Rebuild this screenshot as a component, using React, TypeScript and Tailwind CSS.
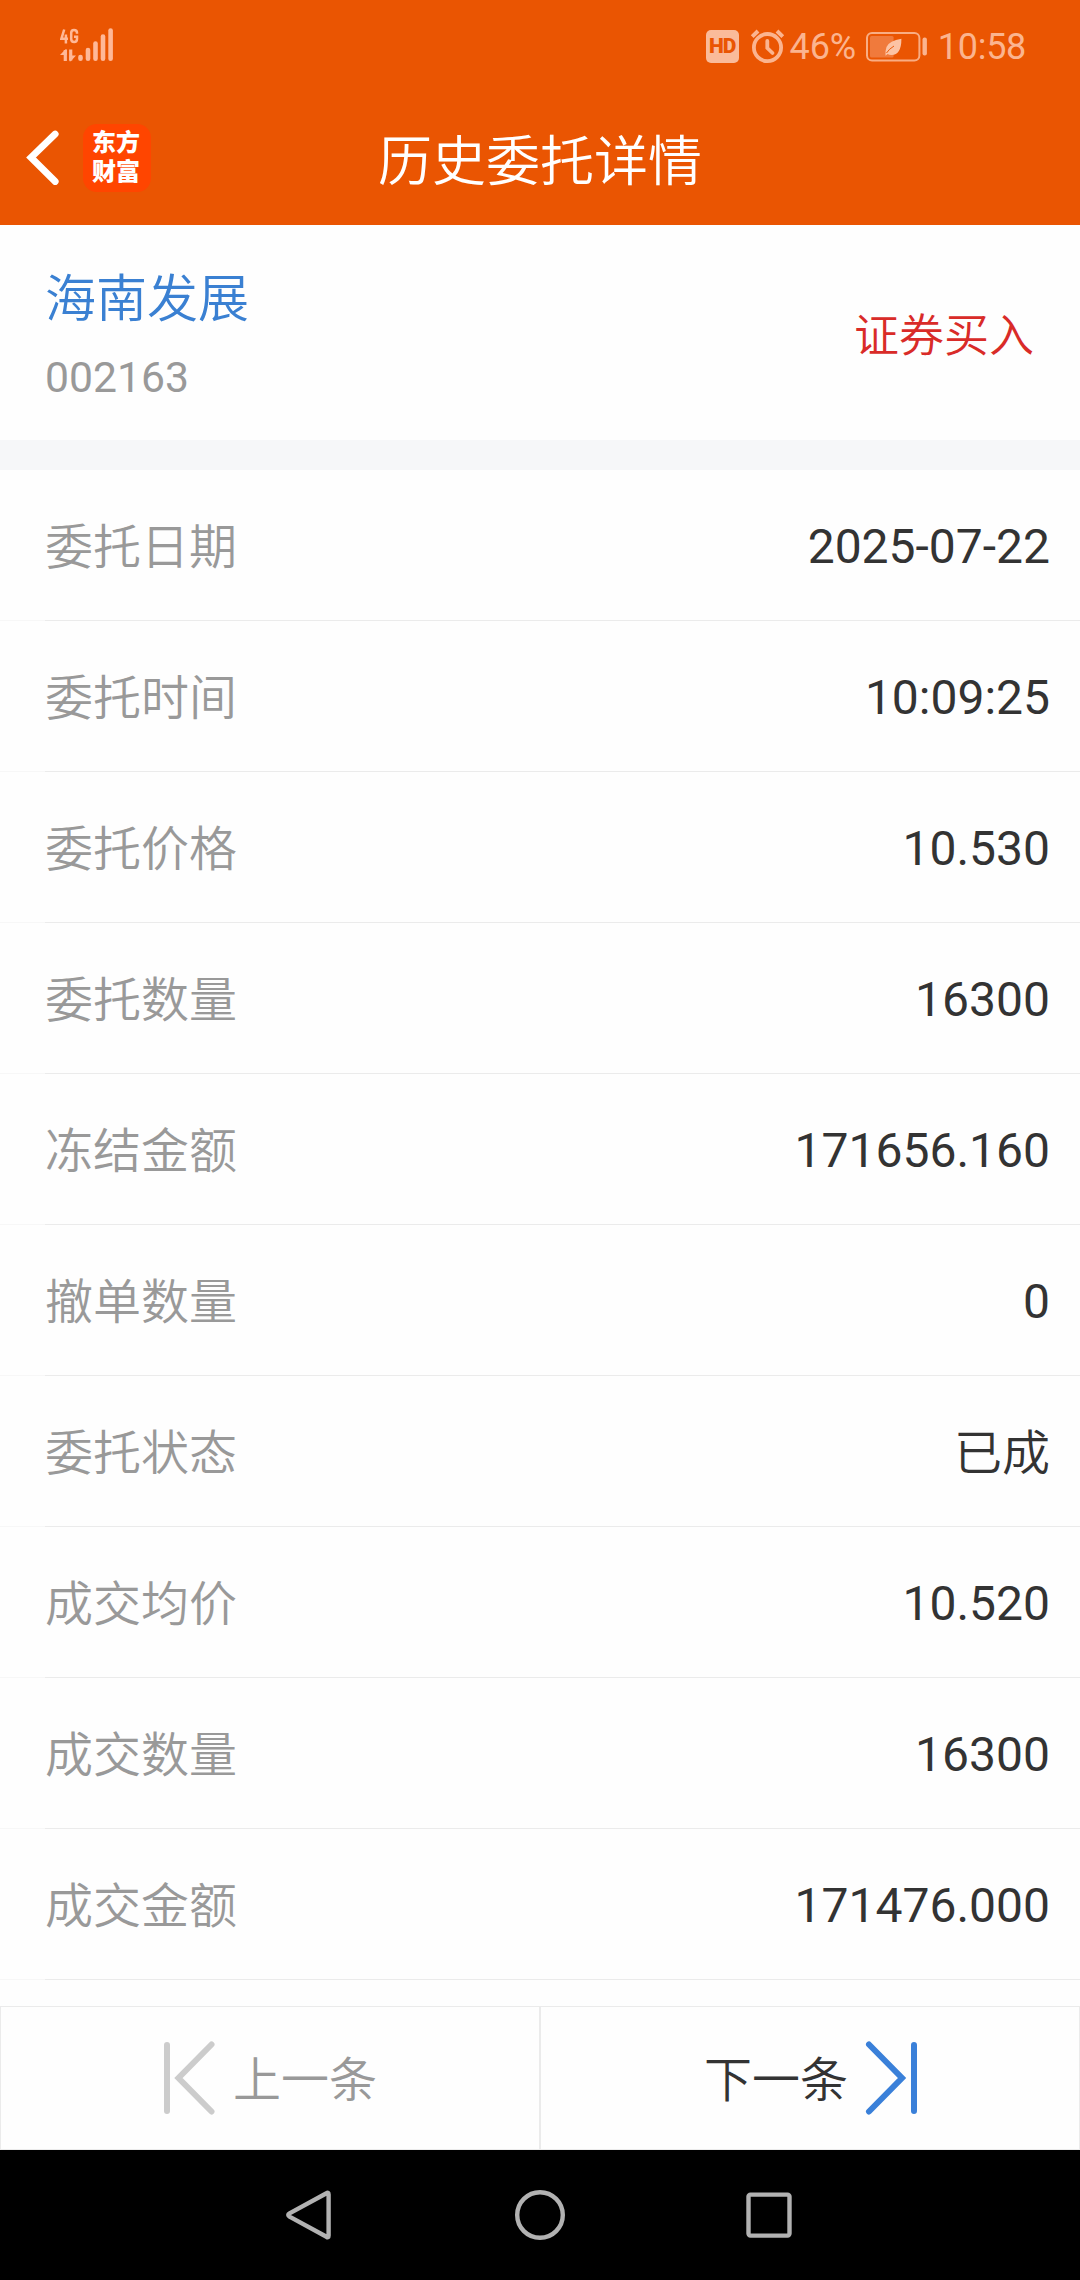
const rows: [string, string][] = [
  ['委托日期', '2025-07-22'],
  ['委托时间', '10:09:25'],
  ['委托价格', '10.530'],
  ['委托数量', '16300'],
  ['冻结金额', '171656.160'],
  ['撤单数量', '0'],
  ['委托状态', '已成'],
  ['成交均价', '10.520'],
  ['成交数量', '16300'],
  ['成交金额', '171476.000'],
];

function SignalIcon() {
  return (
    <svg className="h-[36px] w-[56px]" viewBox="0 0 56 36" fill="none" stroke="#ffb897">
      <path d="M4.2 1.5 L1.4 10.8 H8 M5.9 6.5 V15.5" strokeWidth="2.5" />
      <path d="M17 5.8 V4.8 Q17 2 14 2 Q11.2 2 11.2 5 V11 Q11.2 14 14.2 14 Q17 14 17 11 V8.8 H14" strokeWidth="2.5" />
      <path d="M5.3 22 V33" strokeWidth="3.2" />
      <path d="M0 27 L5.5 21.2 H6.8 V27 Z M16 27.5 L10.8 33.3 H9.5 V27.5 Z" fill="#ffb897" stroke="none" />
      <path d="M10.7 21.5 V32.5" strokeWidth="3.2" />
      <g strokeWidth="4.6" strokeLinecap="round">
        <path d="M20.5 29 V30.7" />
        <path d="M28 22 V30.7" />
        <path d="M35.5 15.5 V30.7" />
        <path d="M43 8.5 V30.7" />
        <path d="M50.6 2.5 V30.7" />
      </g>
    </svg>
  );
}

function AlarmIcon() {
  return (
    <svg className="ml-[11px] h-[36px] w-[36px]" viewBox="0 0 36 36" fill="none" stroke="#fbb48f" strokeLinecap="round">
      <circle cx="17.5" cy="18.6" r="13.6" strokeWidth="3.8" />
      <path d="M2.2 7.6 L8 2 M32.8 7.6 L27 2" strokeWidth="4" strokeLinecap="butt" />
      <path d="M17.3 12 V19 L22.5 24" strokeWidth="3.8" />
    </svg>
  );
}

function BatteryIcon() {
  return (
    <svg className="ml-[9px] h-[32px] w-[64px]" viewBox="0 0 64 32">
      <rect x="2" y="2" width="52.4" height="27.4" rx="5" fill="none" stroke="#f9ad83" strokeWidth="2" />
      <rect x="5" y="5" width="23.6" height="21.4" rx="1.5" fill="#f07a3c" />
      <path d="M36.4 7.8 Q36.4 24 26.5 24 Q24 24 22.6 23 L20.5 24.8 Q20 20 21.5 16 Q24.5 9.5 36.4 7.8 Z" fill="#fcc3a4" />
      <path d="M21.5 22 Q24 18 29 15" stroke="#ea5a08" strokeWidth="1" fill="none" />
      <rect x="57.5" y="6.5" width="4.4" height="18" rx="2" fill="#fbb48f" />
    </svg>
  );
}

function StatusBar() {
  return (
    <div className="flex h-[93px] items-center pr-[54px] pl-[60px] text-[36px] text-[#fbb48f]">
      <div className="pb-[1px]">
        <SignalIcon />
      </div>
      <div className="ml-auto flex items-center">
        <div className="flex h-[33px] w-[33px] items-center justify-center rounded-[5px] bg-[#fabb9a] text-[21px] font-black tracking-[-1px] text-[#ea5502]">
          HD
        </div>
        <AlarmIcon />
        <span className="ml-[4px] tracking-[-0.2px]">46%</span>
        <BatteryIcon />
        <span className="ml-[9px] tracking-[-0.3px]">10:58</span>
      </div>
    </div>
  );
}

function TitleBar() {
  return (
    <div className="grid h-[132px] grid-cols-[1fr_auto_1fr] items-center">
      <div className="flex items-center pb-[3px] pl-[26px]">
        <svg className="h-[56px] w-[34px]" viewBox="0 0 34 56" fill="none" stroke="#fff" strokeWidth="6.8">
          <path d="M29.2 4 L5 27.5 L29.2 51.5" strokeLinecap="round" />
        </svg>
        <div className="ml-[23px] flex h-[68px] w-[68px] flex-col items-center justify-center rounded-[14px] bg-[#ff4500] pr-[2px] text-[24px] leading-[29px] font-black text-white">
          <span>东方</span>
          <span>财富</span>
        </div>
      </div>
      <h1 className="pt-[8px] text-[54px] leading-[60px] font-[350] text-white">历史委托详情</h1>
      <div />
    </div>
  );
}

function StepIcon({ next = false }: { next?: boolean }) {
  return next ? (
    <svg className="ml-[16px] h-[74px] w-[54px]" viewBox="0 0 54 74" fill="none" stroke="#3a80d9" strokeWidth="6">
      <path d="M5 3.5 L38 37 L5 70.5 M50 4 V70" strokeLinecap="round" />
    </svg>
  ) : (
    <svg className="mr-[16px] h-[74px] w-[54px]" viewBox="0 0 54 74" fill="none" stroke="#cccccc" strokeWidth="6">
      <path d="M48.5 3.5 L15.5 37 L48.5 70.5 M4 4 V70" strokeLinecap="round" />
    </svg>
  );
}

export default function App() {
  return (
    <div className="flex h-[2280px] w-[1080px] flex-col bg-[#fefefe] font-['Roboto','Noto_Sans_CJK_SC',sans-serif]">
      <header className="h-[225px] bg-[#ea5502]">
        <StatusBar />
        <TitleBar />
      </header>

      <section className="flex h-[215px] items-center justify-between pt-[7px] pr-[46px] pl-[45px]">
        <div className="flex flex-col">
          <span className="-mt-px text-[51px] leading-[60px] font-[350] text-[#3a80d2]">海南发展</span>
          <span className="mt-[22px] text-[42.7px] leading-[50px] text-[#999999]">002163</span>
        </div>
        <span className="pt-[2px] text-[45px] leading-[50px] font-[350] text-[#d92b28]">证券买入</span>
      </section>
      <div className="h-[30px] bg-[#f6f7f9]" />

      <main>
        {rows.map(([label, value]) => (
          <div key={label} className="flex h-[151px] flex-col">
            <div className="flex flex-1 items-center justify-between pr-[30px] pl-[45px] text-[48px] leading-[56px]">
              <span className="pt-[6px] font-[350] text-[#999999]">{label}</span>
              <span className={value === '已成' ? 'pt-[6px] font-[350] text-[#333333]' : 'pt-[3px] text-[#333333]'}>
                {value}
              </span>
            </div>
            <div className="flex h-px">
              <div className="w-[45px] bg-[#f7f7f7]" />
              <div className="flex-1 bg-[#ebebeb]" />
            </div>
          </div>
        ))}
      </main>

      <div className="mt-[26px] grid h-[144px] grid-cols-2 text-[48px] font-[350]">
        <button className="flex items-center justify-center border border-[#ebebeb] text-[#999999]">
          <StepIcon />
          <span className="pt-[6px]">上一条</span>
        </button>
        <button className="flex items-center justify-center border border-[#ebebeb] pl-[2px] text-[#333333]">
          <span className="pt-[6px]">下一条</span>
          <StepIcon next />
        </button>
      </div>

      <nav className="flex h-[130px] items-center justify-center gap-[179px] bg-black">
        <svg className="h-[54px] w-[50px]" viewBox="0 0 50 54" fill="none" stroke="#b2b2b2" strokeWidth="4.4" strokeLinejoin="round">
          <path d="M42.5 5.2 Q44.6 3.8 44.6 6.5 V47.5 Q44.6 50.2 42.5 48.8 L5.5 28.6 Q3 27 5.5 25.4 Z" />
        </svg>
        <svg className="h-[54px] w-[54px]" viewBox="0 0 54 54" fill="none" stroke="#b2b2b2" strokeWidth="4.4">
          <circle cx="27" cy="27" r="22.8" />
        </svg>
        <svg className="h-[54px] w-[50px]" viewBox="0 0 50 54" fill="none" stroke="#b2b2b2" strokeWidth="4.4">
          <rect x="2.5" y="6.6" width="41" height="41" rx="2" />
        </svg>
      </nav>
    </div>
  );
}
